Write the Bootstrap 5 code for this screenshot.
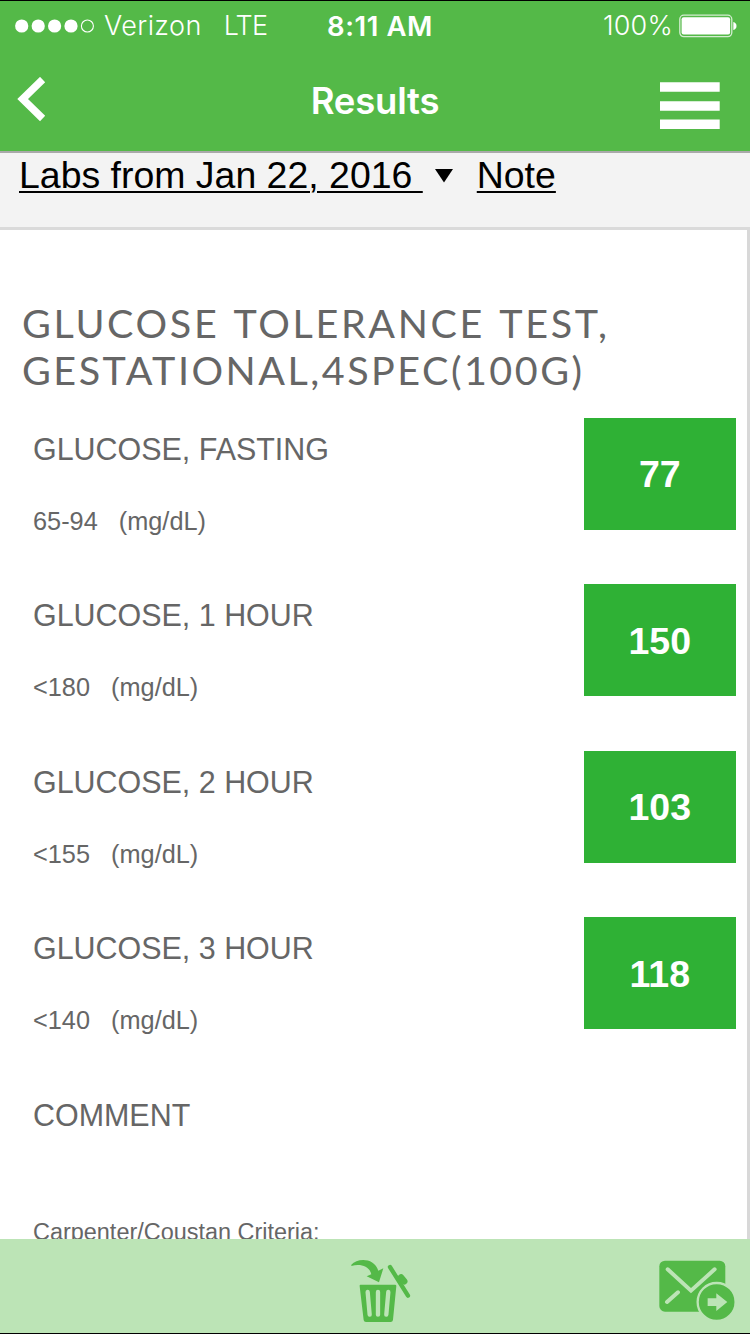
<!DOCTYPE html>
<html lang="en">
<head>
<meta charset="utf-8">
<meta name="viewport" content="width=device-width, initial-scale=1">
<title>Results</title>
<link href="https://cdn.jsdelivr.net/npm/bootstrap@5.3.0/dist/css/bootstrap.min.css" rel="stylesheet">
<style>
body{font-family:"Liberation Sans",Arial,sans-serif;background:#fff;color:#666}
svg{flex-shrink:0}
.screen{width:750px;height:1334px;border-top:1px solid #000;border-bottom:1px solid #000}
.app-head{height:152px;background:#54b948;border-bottom:2px solid #a9a9a9;font-family:Inter,sans-serif}
.status{height:50px;font-size:27px;line-height:50px}
.carrier{padding-left:14px;font-weight:300;letter-spacing:.4px;white-space:nowrap}
.network{letter-spacing:-.8px;padding-left:22px}
.clock{font-weight:600;font-size:27.5px;padding-left:10px;letter-spacing:.6px}
.power{padding-right:13px;font-weight:300;letter-spacing:.2px}
.battery{margin-left:6px}
.titlebar{height:100px}
.titlebar h1{font-size:36.5px;font-weight:600;line-height:100px;letter-spacing:-.2px}
.labs{height:77px;background:#f3f3f3;border-bottom:3px solid #dadada;padding-left:19px;font-size:37.45px;line-height:44px}
.labs a{color:#000;white-space:pre;text-decoration-thickness:2px;text-underline-offset:3px}
.pick-arrow{margin:0 24px 0 12px}
.results{border-right:3px solid #d8d8d8;padding:69px 11px 0 22px}
.results h2{font-family:Lato,sans-serif;font-size:39.5px;line-height:47px;letter-spacing:2.65px;word-spacing:2.6px}
.results h2 span{letter-spacing:2.5px}
.panel{padding-top:24.5px}
.result-row{height:166.5px;padding-left:11px}
.test-name{font-size:30.45px;line-height:36px;padding-top:13.4px}
.range{font-size:25.3px;line-height:30px;margin-top:39px;white-space:pre}
.comment-text{font-size:23.45px;margin-top:84.4px}
.value-box{width:152.5px;height:112px;padding-top:2px;background:#2fb135;font-size:37.5px;font-weight:700}
.tools{height:94px;padding-top:8px;background:#bce4b6}
.trash{padding-left:13px}
.mail{padding-right:13.4px}
</style>
</head>
<body>
<div class="screen d-flex flex-column overflow-hidden">
  <header class="app-head flex-shrink-0 text-white">
    <div class="status row g-0">
      <div class="carrier col-4 d-flex align-items-center">
        <svg width="82" height="16" viewBox="0 0 82 16" fill="#fff"><circle cx="7.7" cy="8" r="6.6"/><circle cx="24.2" cy="8" r="6.6"/><circle cx="40.6" cy="8" r="6.6"/><circle cx="57" cy="8" r="6.6"/><circle cx="73.4" cy="8" r="6" fill="none" stroke="#fff" stroke-width="1.1"/></svg>
        <span class="ms-2">Verizon</span><span class="network">LTE</span>
      </div>
      <div class="clock col-4 text-center">8:11 AM</div>
      <div class="power col-4 d-flex align-items-center justify-content-end">
        <span>100%</span>
        <svg class="battery" width="58" height="24" viewBox="0 0 58 24"><rect x=".8" y="1.2" width="52" height="21.4" rx="4" fill="none" stroke="#fff" stroke-opacity=".75" stroke-width="1.3"/><rect x="2.6" y="3.2" width="48.5" height="17.4" rx="2" fill="#fff"/><path d="M54.3 8v8q3.2-.8 3.2-4t-3.2-4z" fill="#fff"/></svg>
      </div>
    </div>
    <div class="titlebar row g-0 align-items-center">
      <a href="#" class="col-4 d-flex ps-3" aria-label="Back"><svg width="32" height="48" viewBox="0 0 32 48"><path d="M27 4.5 7 24l20 19.5" transform="translate(-.4 -2)" fill="none" stroke="#fff" stroke-width="7.4"/></svg></a>
      <h1 class="col-4 text-center m-0">Results</h1>
      <a href="#" class="col-4 d-flex justify-content-end" aria-label="Menu"><svg width="90" height="60" viewBox="0 0 90 60" fill="#fff"><path d="M-.3 11.2h60v9.5h-60zM-.3 30.2h60v9.5h-60zM-.3 48.5h60v9.5h-60z"/></svg></a>
    </div>
  </header>
  <nav class="labs flex-shrink-0 d-flex">
    <a href="#">Labs from Jan 22, 2016 </a>
    <svg class="pick-arrow" width="18" height="44" viewBox="0 0 18 44"><path d="M0 16h18L9 29.5z"/></svg>
    <a href="#">Note</a>
  </nav>
  <main class="results flex-grow-1 overflow-hidden">
    <h2 class="fw-normal m-0">GLUCOSE TOLERANCE TEST,<br><span>GESTATIONAL,4SPEC(100G)</span></h2>
    <div class="panel">
      <div class="result-row d-flex justify-content-between"><div><div class="test-name">GLUCOSE, FASTING</div><div class="range">65-94   (mg/dL)</div></div><div class="value-box d-flex align-items-center justify-content-center text-white">77</div></div>
      <div class="result-row d-flex justify-content-between"><div><div class="test-name">GLUCOSE, 1 HOUR</div><div class="range">&lt;180   (mg/dL)</div></div><div class="value-box d-flex align-items-center justify-content-center text-white">150</div></div>
      <div class="result-row d-flex justify-content-between"><div><div class="test-name">GLUCOSE, 2 HOUR</div><div class="range">&lt;155   (mg/dL)</div></div><div class="value-box d-flex align-items-center justify-content-center text-white">103</div></div>
      <div class="result-row d-flex justify-content-between"><div><div class="test-name">GLUCOSE, 3 HOUR</div><div class="range">&lt;140   (mg/dL)</div></div><div class="value-box d-flex align-items-center justify-content-center text-white">118</div></div>
      <div class="result-row"><div class="test-name">COMMENT</div><div class="range comment-text">Carpenter/Coustan Criteria:</div></div>
    </div>
  </main>
  <footer class="tools flex-shrink-0 row g-0 align-items-center">
    <a href="#" class="trash offset-4 col-4 d-flex justify-content-center" aria-label="Delete"><svg width="63.3" height="65" viewBox="60 100 190 195"><g fill="#54b948"><path d="M64 120C82 100 132 98 145 138L160 131 147 173 110 155 124 149C119 125 92 116 64 124z"/><path d="M91 180H196Q200 180 199 185L189 286Q188 292 182 292H108Q102 292 101 286L89 185Q88 180 91 180z"/></g><g stroke="#54b948" fill="none" stroke-linecap="round"><path d="M180 127 234 213" stroke-width="13"/><path d="M213 158 223 170" stroke-width="19"/></g><path d="M113 202 119 270M144 202V270M175 202 169 270" stroke="#bce4b6" stroke-width="13" stroke-linecap="round"/></svg></a>
    <a href="#" class="mail col-4 d-flex justify-content-end" aria-label="Send"><svg width="78.3" height="63.3" viewBox="55 100 235 190"><rect x="59" y="108" width="198" height="153" rx="17" fill="#54b948"/><path d="M84 134 154 198 225 134M115 203 82 232" fill="none" stroke="#bce4b6" stroke-width="12" stroke-linecap="round" stroke-linejoin="miter"/><circle cx="231" cy="232" r="57" fill="#54b948" stroke="#bce4b6" stroke-width="7"/><path d="M204 221H230V206L263 232 230 259V244H204z" fill="#bce4b6"/></svg></a>
  </footer>
</div>
<script src="https://cdn.jsdelivr.net/npm/bootstrap@5.3.0/dist/js/bootstrap.bundle.min.js"></script>
</body>
</html>
